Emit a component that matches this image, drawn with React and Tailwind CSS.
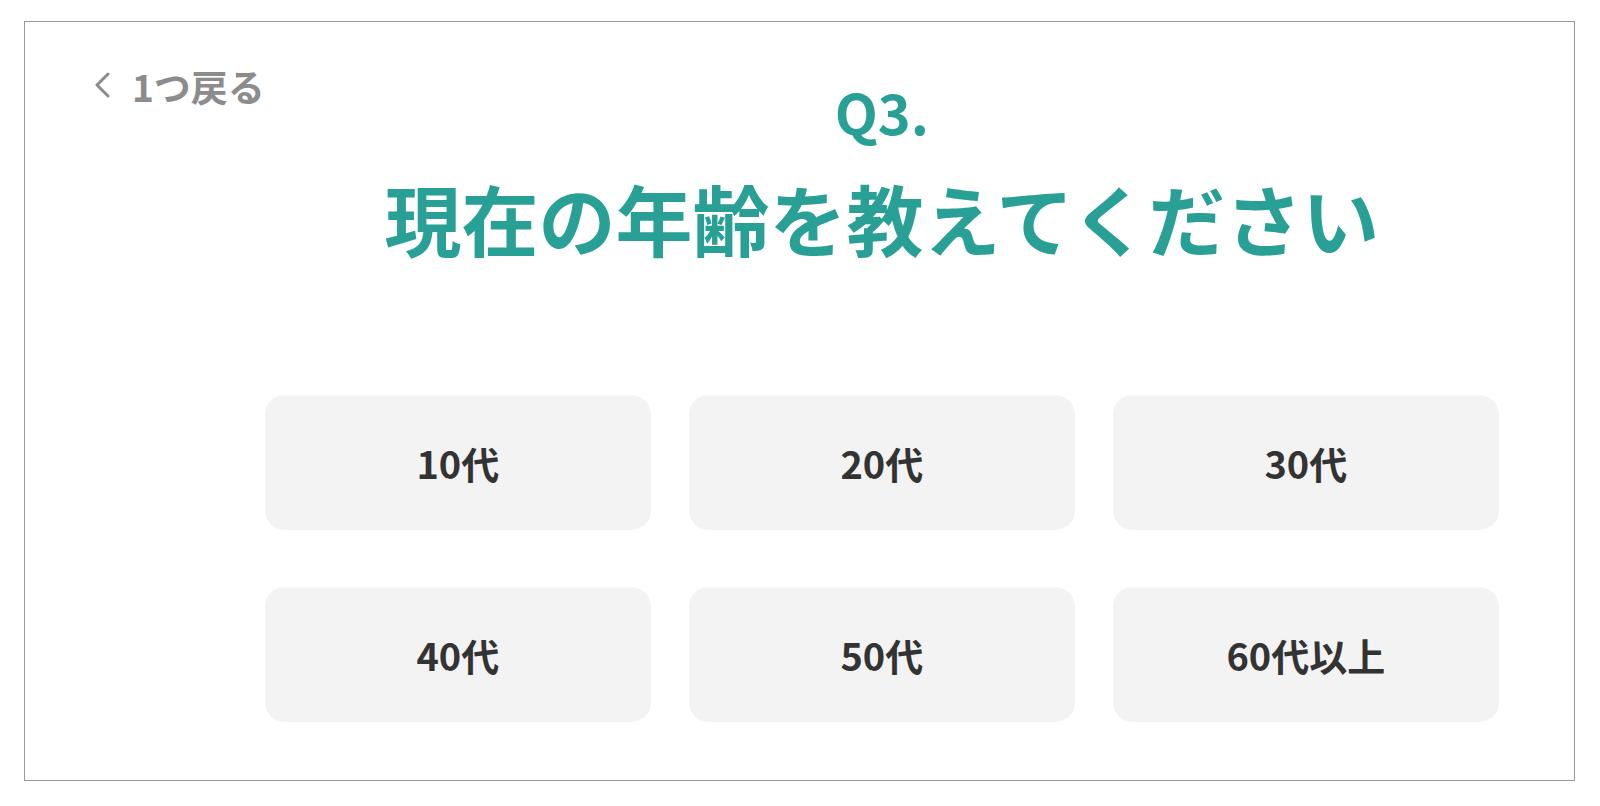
const options = ['10代', '20代', '30代', '40代', '50代', '60代以上'];

export default function App() {
  return (
    <div
      className="min-h-screen bg-white pl-[24px] pt-[21px]"
      style={{ fontFamily: '"Noto Sans CJK JP", "Noto Sans", sans-serif' }}
    >
      <div className="flex h-[760px] w-[1551px] border border-[#9a9a9a] bg-white pl-[68px] pr-[79px]">
        {/* 戻るリンク */}
        <div className="shrink-0 pt-[46px]">
          <button className="flex items-center gap-[21px] whitespace-nowrap text-[37px] font-bold leading-none text-[#8c8c8c]">
            <svg width="18" height="26" viewBox="0 0 18 26" fill="none" className="-mt-[3px] shrink-0">
              <polyline
                points="15,2 4,13 15,24"
                stroke="#8c8c8c"
                strokeWidth="3"
                strokeLinecap="round"
                strokeLinejoin="round"
              />
            </svg>
            <span>1つ戻る</span>
          </button>
        </div>

        {/* 質問本体 */}
        <div className="ml-auto flex w-[1234px] shrink-0 flex-col items-center pt-[61px]">
          <p className="text-[56px] font-bold leading-none text-[#28a096]">Q3.</p>
          <h1 className="mt-[40px] whitespace-nowrap text-[77px] font-bold leading-none text-[#28a096]">
            現在の年齢を教えてください
          </h1>

          <div className="mt-[139px] grid w-full grid-cols-3 gap-x-[38px] gap-y-[57px]">
            {options.map((label) => (
              <button
                key={label}
                className="flex h-[135px] items-center justify-center rounded-[20px] bg-[#f3f3f3] text-[38px] font-bold text-[#333333]"
              >
                {label}
              </button>
            ))}
          </div>
        </div>
      </div>
    </div>
  );
}
